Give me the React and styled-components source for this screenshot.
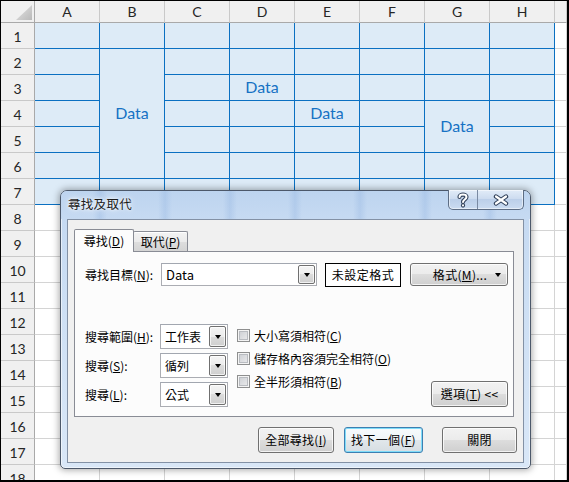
import React from 'react'
import styled, { createGlobalStyle } from 'styled-components'

const GlobalStyle = createGlobalStyle`
  html, body { margin: 0; padding: 0; background: #fff; }
  body { font-family: "Noto Sans CJK TC", "Noto Sans", sans-serif; }
  * { box-sizing: border-box; }
`

const COLS = ['A', 'B', 'C', 'D', 'E', 'F', 'G', 'H', '']
const ROWS = 18
const MERGES = [
  { r: 2, c: 2, span: 5 },
  { r: 4, c: 7, span: 2 },
]
const VALUES = { '2-2': 'Data', '3-4': 'Data', '4-5': 'Data', '4-7': 'Data' }

const Screen = styled.div`
  position: relative;
  width: 569px;
  height: 482px;
  border-style: solid;
  border-color: #000;
  border-width: 1px 2px 2px 1px;
  overflow: hidden;
  background: #fff;
`

const Sheet = styled.div`
  display: grid;
  grid-template-columns: 34px repeat(8, 65px) 1fr;
  grid-template-rows: 22px repeat(${ROWS}, 26px);
  font-family: Lato, "Open Sans", sans-serif;
`

const Corner = styled.div`
  grid-row: 1;
  grid-column: 1;
  background: #f0f0f0;
  border-right: 1px solid #a9a9a9;
  border-bottom: 1px solid #a9a9a9;
  display: flex;
  align-items: flex-end;
  justify-content: flex-end;
  padding: 0 2px 2px 0;
`

const CornerMark = styled.span`
  width: 16px;
  height: 15px;
  background: linear-gradient(135deg, #e4e4e4, #b9b9b9);
  clip-path: polygon(100% 0, 100% 100%, 0 100%);
`

const ColHead = styled.div`
  grid-row: 1;
  grid-column: ${p => p.$col + 1};
  background: #f0f0f0;
  border-right: 1px solid #c9c9c9;
  border-bottom: 1px solid #a9a9a9;
  display: flex;
  align-items: center;
  justify-content: center;
  font-size: 14px;
  color: #262626;
`

const RowHead = styled.div`
  grid-row: ${p => p.$row + 1};
  grid-column: 1;
  background: #f0f0f0;
  border-right: 1px solid #a9a9a9;
  border-bottom: 1px solid #c9c9c9;
  display: flex;
  align-items: center;
  justify-content: center;
  padding-top: 2px;
  font-size: 14px;
  color: #262626;
`

const Cell = styled.div`
  grid-row: ${p => p.$row + 1} / span ${p => p.$span};
  grid-column: ${p => p.$col + 1};
  border-right: 1px solid ${p => (p.$data ? '#0a70c2' : '#d4d4d4')};
  border-bottom: 1px solid ${p => (p.$data ? '#0a70c2' : '#d4d4d4')};
  background: ${p => (p.$data ? '#ddebf7' : '#fff')};
  display: flex;
  align-items: center;
  justify-content: center;
  padding-bottom: 3px;
  font-size: 16px;
  color: #1672c4;
`

/* ---------- dialog ---------- */

const Dialog = styled.div`
  position: absolute;
  left: 59px;
  top: 189px;
  width: 471px;
  height: 279px;
  border: 1px solid #4c586a;
  border-radius: 7px 7px 5px 5px;
  padding: 0 6px 5px;
  display: flex;
  flex-direction: column;
  background: linear-gradient(#c3d8f1, #cddff4 40%, #d9e7f7);
  box-shadow: 0 0 7px 1px rgba(0, 0, 0, 0.35), inset 0 0 0 1px rgba(255, 255, 255, 0.55);
  font-family: "Noto Sans CJK TC", "Noto Sans", sans-serif;
  font-size: 12px;
  line-height: 16px;
  color: #000;
`

const TitleBar = styled.div`
  height: 28px;
  margin: 0 -6px;
  padding: 0 6px 0 7px;
  display: flex;
  align-items: flex-start;
  border-radius: 6px 6px 0 0;
  background:
    repeating-linear-gradient(90deg,
      rgba(120, 160, 215, 0) 0 32px,
      rgba(120, 160, 215, 0.22) 39px,
      rgba(120, 160, 215, 0) 46px,
      rgba(120, 160, 215, 0) 65px),
    linear-gradient(#bdd4ef, #c6daf2);
`

const Title = styled.span`
  margin-top: 5px;
  font-size: 12.5px;
  color: #1b1b1b;
  text-shadow: 0 0 6px #fff, 0 0 3px #fff;
  letter-spacing: 0.3px;
`

const CaptionGroup = styled.div`
  margin-left: auto;
  margin-top: -1px;
  height: 20px;
  display: flex;
  border: 1px solid #5d6d84;
  border-top: none;
  border-radius: 0 0 5px 5px;
  overflow: hidden;
  background: linear-gradient(#e2ecf8, #cddcf0 45%, #bccfe9 50%, #cbdcf1);
  box-shadow: inset 0 0 0 1px rgba(255, 255, 255, 0.5);
`

const CaptionButton = styled.div`
  width: ${p => p.$w}px;
  height: 100%;
  display: flex;
  align-items: center;
  justify-content: center;
  & + & { border-left: 1px solid #7a8aa2; }
`

const Client = styled.div`
  flex: 1;
  background: #f0f0f0;
  border: 1px solid #8391a5;
  padding: 9px 6px 9px 6px;
  display: flex;
  flex-direction: column;
`

const TabStrip = styled.div`
  height: 22px;
  display: flex;
  align-items: flex-end;
  position: relative;
  z-index: 2;
`

const Tab = styled.div`
  width: ${p => p.$w}px;
  height: ${p => (p.$active ? 23 : 20)}px;
  margin-bottom: ${p => (p.$active ? -1 : 0)}px;
  margin-left: ${p => (p.$active ? 0 : -1)}px;
  border: 1px solid #898c95;
  border-bottom: none;
  border-radius: 2px 2px 0 0;
  background: ${p => (p.$active ? '#fcfcfc' : 'linear-gradient(#f3f3f3, #ebebeb 50%, #dedede 50%, #d4d4d4)')};
  box-shadow: ${p => (p.$active ? 'none' : 'inset 0 1px 0 #fff')};
  display: flex;
  align-items: center;
  justify-content: center;
  padding-top: ${p => (p.$active ? 0 : 1)}px;
  position: relative;
  z-index: ${p => (p.$active ? 2 : 1)};
`

const Panel = styled.div`
  width: 440px;
  height: 166px;
  border: 1px solid #898c95;
  background: #fcfcfc;
  padding: 11px 5px 9px 10px;
  display: flex;
  flex-direction: column;
`

const FindRow = styled.div`
  display: flex;
  align-items: center;
  height: 23px;
`

const Label = styled.span`
  width: ${p => p.$w}px;
  flex: none;
  white-space: nowrap;
`

const Combo = styled.div`
  width: ${p => p.$w}px;
  height: ${p => p.$h}px;
  flex: none;
  display: flex;
  border: 1px solid #abadb3;
  border-top-color: #a2a7b0;
  background: #fff;
  padding: 1px;
`

const ComboText = styled.span`
  flex: 1;
  display: flex;
  align-items: center;
  padding-left: 3px;
  font-size: ${p => (p.$latin ? 13 : 12)}px;
`

const ComboArrow = styled.span`
  width: 17px;
  flex: none;
  border: 1px solid #707070;
  border-radius: 2px;
  background: linear-gradient(#f4f4f4, #ececec 50%, #dcdcdc 50%, #cfcfcf);
  box-shadow: inset 0 0 0 1px rgba(255, 255, 255, 0.7);
  display: flex;
  align-items: center;
  justify-content: center;
`

const Triangle = styled.span`
  width: 0;
  height: 0;
  border-left: 3.5px solid transparent;
  border-right: 3.5px solid transparent;
  border-top: 4px solid #000;
`

const FormatBox = styled.div`
  width: 76px;
  height: 24px;
  margin-left: 8px;
  margin-top: 1px;
  flex: none;
  border: 1px solid #000;
  background: #fff;
  display: flex;
  align-items: center;
  justify-content: center;
  letter-spacing: 0.5px;
`

const Button = styled.div`
  width: ${p => p.$w}px;
  height: ${p => p.$h || 26}px;
  flex: none;
  border: 1px solid ${p => (p.$default ? '#3c7fb1' : '#707070')};
  border-radius: 3px;
  background: ${p => (p.$default
    ? 'linear-gradient(#f7fbfd, #eff4f7 50%, #e1e7eb 50%, #d6dde2)'
    : 'linear-gradient(#f2f2f2, #ebebeb 50%, #dddddd 50%, #cfcfcf)')};
  box-shadow: inset 0 0 0 1px ${p => (p.$default ? '#7fdcf9' : 'rgba(255, 255, 255, 0.75)')};
  display: flex;
  align-items: center;
  justify-content: center;
  padding: ${p => (p.$menu ? '0 6px 0 14px' : '0')};
  white-space: nowrap;
  letter-spacing: 0.3px;
`

const ButtonText = styled.span`
  flex: 1;
  text-align: center;
`

const Options = styled.div`
  margin-top: 38px;
  display: flex;
  flex: 1;
`

const ComboGrid = styled.div`
  display: grid;
  grid-template-columns: 75px 68px;
  grid-auto-rows: 25px;
  row-gap: 4px;
  align-items: center;
`

const CheckList = styled.div`
  margin-left: 9px;
  display: flex;
  flex-direction: column;
`

const CheckRow = styled.div`
  height: 23px;
  display: flex;
  align-items: center;
  gap: 4px;
  white-space: nowrap;
`

const CheckBox = styled.span`
  width: 13px;
  height: 13px;
  flex: none;
  border: 1px solid #8e8f8f;
  background: linear-gradient(135deg, #c9ccd1, #eeeeef);
  box-shadow: inset 0 0 0 1px #f4f4f4, inset 0 0 0 2px #b9bcc1;
`

const OptionsButtonWrap = styled.div`
  margin-left: auto;
  align-self: flex-end;
`

const BottomRow = styled.div`
  margin-top: 10px;
  display: flex;
  justify-content: flex-end;
`

const Gap = styled.span`
  width: ${p => p.$w}px;
  flex: none;
`

const HelpIcon = () => (
  <svg width="14" height="16" viewBox="0 0 14 16">
    <g fill="none" strokeLinecap="round" strokeLinejoin="round">
      <path d="M3.5 5 C3.5 1.8 10.5 1.8 10.5 5 C10.5 7.4 7 7.6 7 10" stroke="#33435c" strokeWidth="4.2" />
      <path d="M7 13.3 V13.6" stroke="#33435c" strokeWidth="4.2" />
      <path d="M3.5 5 C3.5 1.8 10.5 1.8 10.5 5 C10.5 7.4 7 7.6 7 10" stroke="#fff" strokeWidth="2" />
      <path d="M7 13.3 V13.6" stroke="#fff" strokeWidth="2" />
    </g>
  </svg>
)

const CloseIcon = () => (
  <svg width="16" height="12" viewBox="0 0 16 12">
    <g fill="none" strokeLinecap="round">
      <path d="M3 2.5 L13 9.5 M13 2.5 L3 9.5" stroke="#33435c" strokeWidth="4.4" />
      <path d="M3 2.5 L13 9.5 M13 2.5 L3 9.5" stroke="#fff" strokeWidth="2.2" />
    </g>
  </svg>
)

const Select = ({ w, h, value, latin }) => (
  <Combo $w={w} $h={h}>
    <ComboText $latin={latin}>{value}</ComboText>
    <ComboArrow><Triangle /></ComboArrow>
  </Combo>
)

const Check = ({ children }) => (
  <CheckRow>
    <CheckBox />
    <span>{children}</span>
  </CheckRow>
)

function SheetGrid() {
  const cells = []
  for (let r = 1; r <= ROWS; r++) {
    for (let c = 1; c <= COLS.length; c++) {
      const covered = MERGES.some(m => m.c === c && r > m.r && r < m.r + m.span)
      if (covered) continue
      const merge = MERGES.find(m => m.c === c && m.r === r)
      cells.push(
        <Cell key={`${r}-${c}`} $row={r} $col={c} $span={merge ? merge.span : 1} $data={r <= 7 && c <= 8}>
          {VALUES[`${r}-${c}`]}
        </Cell>
      )
    }
  }
  return (
    <Sheet>
      <Corner><CornerMark /></Corner>
      {COLS.map((name, i) => <ColHead key={i} $col={i + 1}>{name}</ColHead>)}
      {Array.from({ length: ROWS }, (_, i) => <RowHead key={i} $row={i + 1}>{i + 1}</RowHead>)}
      {cells}
    </Sheet>
  )
}

export default function App() {
  return (
    <>
      <GlobalStyle />
      <Screen>
        <SheetGrid />
        <Dialog>
          <TitleBar>
            <Title>尋找及取代</Title>
            <CaptionGroup>
              <CaptionButton $w={28}><HelpIcon /></CaptionButton>
              <CaptionButton $w={46}><CloseIcon /></CaptionButton>
            </CaptionGroup>
          </TitleBar>
          <Client>
            <TabStrip>
              <Tab $active $w={60}>尋找(<u>D</u>)</Tab>
              <Tab $w={55}>取代(<u>P</u>)</Tab>
            </TabStrip>
            <Panel>
              <FindRow>
                <Label $w={76}>尋找目標(<u>N</u>):</Label>
                <Select w={156} h={23} value="Data" latin />
                <FormatBox>未設定格式</FormatBox>
                <Gap $w={9} />
                <Button $w={98} $h={23} $menu>
                  <ButtonText>格式(<u>M</u>)...</ButtonText>
                  <Triangle />
                </Button>
              </FindRow>
              <Options>
                <ComboGrid>
                  <Label $w={75}>搜尋範圍(<u>H</u>):</Label>
                  <Select w={68} h={25} value="工作表" />
                  <Label $w={75}>搜尋(<u>S</u>):</Label>
                  <Select w={68} h={25} value="循列" />
                  <Label $w={75}>搜尋(<u>L</u>):</Label>
                  <Select w={68} h={25} value="公式" />
                </ComboGrid>
                <CheckList>
                  <Check>大小寫須相符(<u>C</u>)</Check>
                  <Check>儲存格內容須完全相符(<u>O</u>)</Check>
                  <Check>全半形須相符(<u>B</u>)</Check>
                </CheckList>
                <OptionsButtonWrap>
                  <Button $w={77}>選項(<u>T</u>) &lt;&lt;</Button>
                </OptionsButtonWrap>
              </Options>
            </Panel>
            <BottomRow>
              <Button $w={76}>全部尋找(<u>I</u>)</Button>
              <Gap $w={10} />
              <Button $w={79} $default>找下一個(<u>F</u>)</Button>
              <Gap $w={19} />
              <Button $w={75}>關閉</Button>
            </BottomRow>
          </Client>
        </Dialog>
      </Screen>
    </>
  )
}
